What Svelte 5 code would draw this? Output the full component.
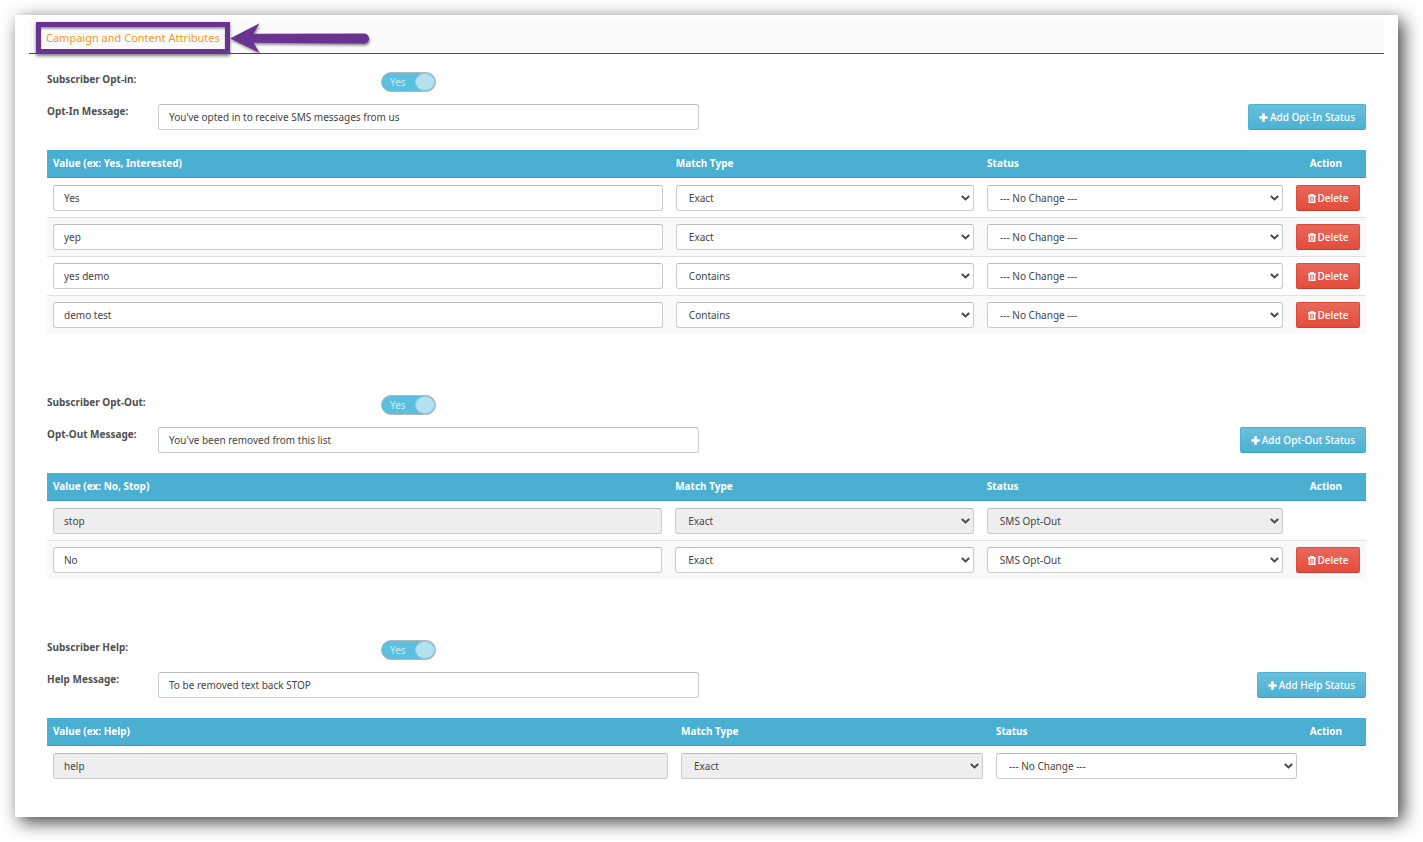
<script>
  const matchTypes = ['Exact', 'Contains'];
  const statuses = ['--- No Change ---', 'SMS Opt-In', 'SMS Opt-Out'];
  const noChange = statuses[0];

  // Column widths are percentages of the table, the action column takes the rest
  let sections = $state([
    {
      id: 'opt-in',
      title: 'Subscriber Opt-in:',
      messageLabel: 'Opt-In Message:',
      message: 'You’ve opted in to receive SMS messages from us',
      addLabel: 'Add Opt-In Status',
      valueHeader: 'Value (ex: Yes, Interested)',
      enabled: true,
      columns: [47.22, 23.6, 23.43],
      rows: [
        { value: 'Yes', match: 'Exact', status: noChange },
        { value: 'yep', match: 'Exact', status: noChange },
        { value: 'yes demo', match: 'Contains', status: noChange },
        { value: 'demo test', match: 'Contains', status: noChange },
      ],
    },
    {
      id: 'opt-out',
      title: 'Subscriber Opt-Out:',
      messageLabel: 'Opt-Out Message:',
      message: "You've been removed from this list",
      addLabel: 'Add Opt-Out Status',
      valueHeader: 'Value (ex: No, Stop)',
      enabled: true,
      columns: [47.17, 23.63, 23.45],
      rows: [
        { value: 'stop', match: 'Exact', status: 'SMS Opt-Out', locked: true, statusLocked: true },
        { value: 'No', match: 'Exact', status: 'SMS Opt-Out' },
      ],
    },
    {
      id: 'help',
      title: 'Subscriber Help:',
      messageLabel: 'Help Message:',
      message: 'To be removed text back STOP',
      addLabel: 'Add Help Status',
      valueHeader: 'Value (ex: Help)',
      enabled: true,
      columns: [47.61, 23.88, 23.81],
      rows: [{ value: 'help', match: 'Exact', status: noChange, locked: true }],
    },
  ]);

  function addRow(section) {
    section.rows.push({ value: '', match: 'Exact', status: noChange });
  }

  function deleteRow(section, index) {
    section.rows.splice(index, 1);
  }
</script>

{#snippet chevron()}
  <svg class="chevron" width="9" height="6" viewBox="0 0 9 6" fill="none" aria-hidden="true">
    <path d="M0.8 0.9L4.5 4.4L8.2 0.9" stroke="#4a4a4a" stroke-width="2" />
  </svg>
{/snippet}

<main class="panel">
  <header class="panel-header">
    <h1 class="highlight">
      <a href="#attributes">Campaign and Content Attributes</a>
      <svg class="arrow" width="140" height="32" viewBox="0 0 140 32" aria-hidden="true">
        <path
          d="M0 16.5L29.5 1.3L23.5 11.8L134 11.5A5 5 0 0 1 134 21.7L23.5 20.7L29.5 30.7Z"
          fill="#693390"
        />
      </svg>
    </h1>
  </header>

  <div class="sections" id="attributes">
    {#each sections as section (section.id)}
      <section>
        <div class="toggle-row">
          <label class="toggle-label" for="{section.id}-enabled">{section.title}</label>
          <span class="switch">
            <input type="checkbox" id="{section.id}-enabled" bind:checked={section.enabled} />
            <span class="track" aria-hidden="true">
              <span class="track-text">{section.enabled ? 'Yes' : 'No'}</span>
              <span class="knob"></span>
            </span>
          </span>
        </div>

        <div class="message-row">
          <label class="message-label" for="{section.id}-message">{section.messageLabel}</label>
          <input
            class="control message"
            type="text"
            id="{section.id}-message"
            bind:value={section.message}
          />
          <button type="button" class="btn btn-add" onclick={() => addRow(section)}>
            <svg width="9" height="9" viewBox="0 0 9 9" aria-hidden="true">
              <path d="M3.2 0.3H5.8V3.2H8.7V5.8H5.8V8.7H3.2V5.8H0.3V3.2H3.2Z" fill="currentColor" />
            </svg>
            {section.addLabel}
          </button>
        </div>

        <table>
          <colgroup>
            {#each section.columns as width}
              <col style="width: {width}%" />
            {/each}
            <col />
          </colgroup>
          <thead>
            <tr>
              <th>{section.valueHeader}</th>
              <th>Match Type</th>
              <th>Status</th>
              <th class="action">Action</th>
            </tr>
          </thead>
          <tbody>
            {#each section.rows as row, i}
              <tr>
                <td>
                  <input
                    class="control"
                    type="text"
                    aria-label="Value"
                    bind:value={row.value}
                    disabled={row.locked}
                  />
                </td>
                <td>
                  <div class="select">
                    <select
                      class="control"
                      aria-label="Match Type"
                      bind:value={row.match}
                      disabled={row.locked}
                    >
                      {#each matchTypes as type}
                        <option value={type}>{type}</option>
                      {/each}
                    </select>
                    {@render chevron()}
                  </div>
                </td>
                <td>
                  <div class="select">
                    <select
                      class="control"
                      aria-label="Status"
                      bind:value={row.status}
                      disabled={row.statusLocked}
                    >
                      {#each statuses as status}
                        <option value={status}>{status}</option>
                      {/each}
                    </select>
                    {@render chevron()}
                  </div>
                </td>
                <td>
                  {#if !row.locked}
                    <button
                      type="button"
                      class="btn btn-delete"
                      onclick={() => deleteRow(section, i)}
                    >
                      <svg width="8" height="9" viewBox="0 0 8 9" fill="none" aria-hidden="true">
                        <path d="M0 2H8M2.6 1.8V0.6H5.4V1.8" stroke="currentColor" stroke-width="1.3" />
                        <path d="M1.3 2V8.3H6.7V2" stroke="currentColor" stroke-width="1.4" />
                        <path d="M3.2 3.3V7.2M4.8 3.3V7.2" stroke="currentColor" stroke-width="0.9" />
                      </svg>
                      Delete
                    </button>
                  {/if}
                </td>
              </tr>
            {/each}
          </tbody>
        </table>
      </section>
    {/each}
  </div>
</main>

<style>
  :global(body) {
    margin: 0;
    background: #fff;
  }

  .panel {
    margin: 15px 25px 25px 15px;
    padding-top: 6px;
    background: #fff;
    box-shadow: 5px 5px 17px rgba(0, 0, 0, 0.75);
    font-family: 'Noto Sans', 'Open Sans', sans-serif;
    font-size: 10px;
    line-height: 14px;
    color: #444;
  }

  .panel-header {
    display: flex;
    margin: 0 14px;
    padding: 1px 7px 0;
    background: #fafafa;
    border-bottom: 1px solid #5f3a8c;
  }

  .highlight {
    position: relative;
    margin: 0 0 -1px;
    padding: 3px 5px;
    border: 5px solid #693390;
    box-shadow:
      0 2px 3px rgba(0, 0, 0, 0.5),
      inset 0 2px 2px rgba(0, 0, 0, 0.35);
    font-size: 11px;
    font-weight: 400;
    line-height: 16px;
    white-space: nowrap;
  }

  .highlight a {
    color: #f29a24;
    text-decoration: none;
  }

  .arrow {
    position: absolute;
    top: -5px;
    left: calc(100% + 5px);
    overflow: visible;
    filter: drop-shadow(1px 2px 1px rgba(0, 0, 0, 0.4));
  }

  .sections {
    display: flex;
    flex-direction: column;
    gap: 61px;
    padding: 18px 32px 32px;
  }

  .toggle-row,
  .message-row {
    display: flex;
    align-items: flex-start;
  }

  .toggle-row {
    margin-bottom: 12px;
  }

  .message-row {
    margin-bottom: 20px;
  }

  .toggle-label,
  .message-label {
    flex: none;
    font-weight: 700;
    color: #505050;
  }

  .toggle-label {
    width: 334px;
  }

  .message-label {
    width: 111px;
  }

  .switch {
    display: grid;
  }

  .switch input,
  .track {
    grid-area: 1 / 1;
  }

  .switch input {
    width: 100%;
    height: 100%;
    margin: 0;
    opacity: 0;
  }

  .track {
    display: flex;
    align-items: center;
    justify-content: space-between;
    box-sizing: border-box;
    width: 55px;
    height: 20px;
    padding-left: 8px;
    border: 1px solid #b3b8ba;
    border-radius: 10px;
    background: #5bc0de;
    color: #c9e9f4;
    pointer-events: none;
  }

  .knob {
    box-sizing: border-box;
    width: 20px;
    height: 18px;
    border: 1px solid #9ccbdc;
    border-radius: 50%;
    background: #b5e0ef;
  }

  .switch input:not(:checked) + .track {
    background: #bbb;
  }

  .control {
    display: block;
    box-sizing: border-box;
    width: 100%;
    height: 26px;
    margin: 0;
    padding: 0 10px 1px;
    border: 1px solid #ccc;
    border-top-color: #bbb;
    border-radius: 3px;
    background: #fff;
    font: inherit;
    color: #444;
  }

  .control:disabled {
    background: #eee;
    opacity: 1;
  }

  .message {
    width: 41%;
  }

  .select {
    display: grid;
    align-items: center;
  }

  .select select {
    grid-area: 1 / 1;
    padding: 0 20px 0 12px;
    appearance: none;
  }

  .chevron {
    grid-area: 1 / 1;
    justify-self: end;
    margin-right: 4px;
    pointer-events: none;
  }

  .btn {
    display: flex;
    align-items: center;
    justify-content: center;
    gap: 2px;
    box-sizing: border-box;
    height: 26px;
    padding: 0 10px;
    border: 1px solid;
    border-radius: 2px;
    font: inherit;
    font-weight: 500;
    color: #fff;
    white-space: nowrap;
    cursor: pointer;
  }

  .btn-add {
    margin-left: auto;
    border-color: #4eb1d0 #4eb1d0 #3fa3c4;
    background: linear-gradient(#69bfda, #4cb1d2);
  }

  .btn-delete {
    width: 100%;
    padding: 0;
    border-color: #dc4a3c #dc4a3c #cf3c2d;
    background: linear-gradient(#e8685b, #e44c3a);
  }

  table {
    width: 100%;
    border-collapse: separate;
    border-spacing: 0;
    table-layout: fixed;
  }

  th {
    height: 26px;
    padding: 0 6px 1px;
    border-bottom: 1px solid #3b9dbf;
    background: #4bafd1;
    color: #fff;
    font-weight: 700;
    text-align: left;
  }

  .action {
    padding: 0 24px 1px 0;
    text-align: right;
  }

  td {
    padding: 6px 7px 6px 6px;
    border-top: 1px solid #e1e1e1;
    vertical-align: middle;
  }

  td:last-child {
    padding-right: 6px;
  }

  tbody tr:first-child td {
    border-top-color: transparent;
  }

  tbody tr:nth-child(even) {
    background: #f9f9f9;
  }
</style>
